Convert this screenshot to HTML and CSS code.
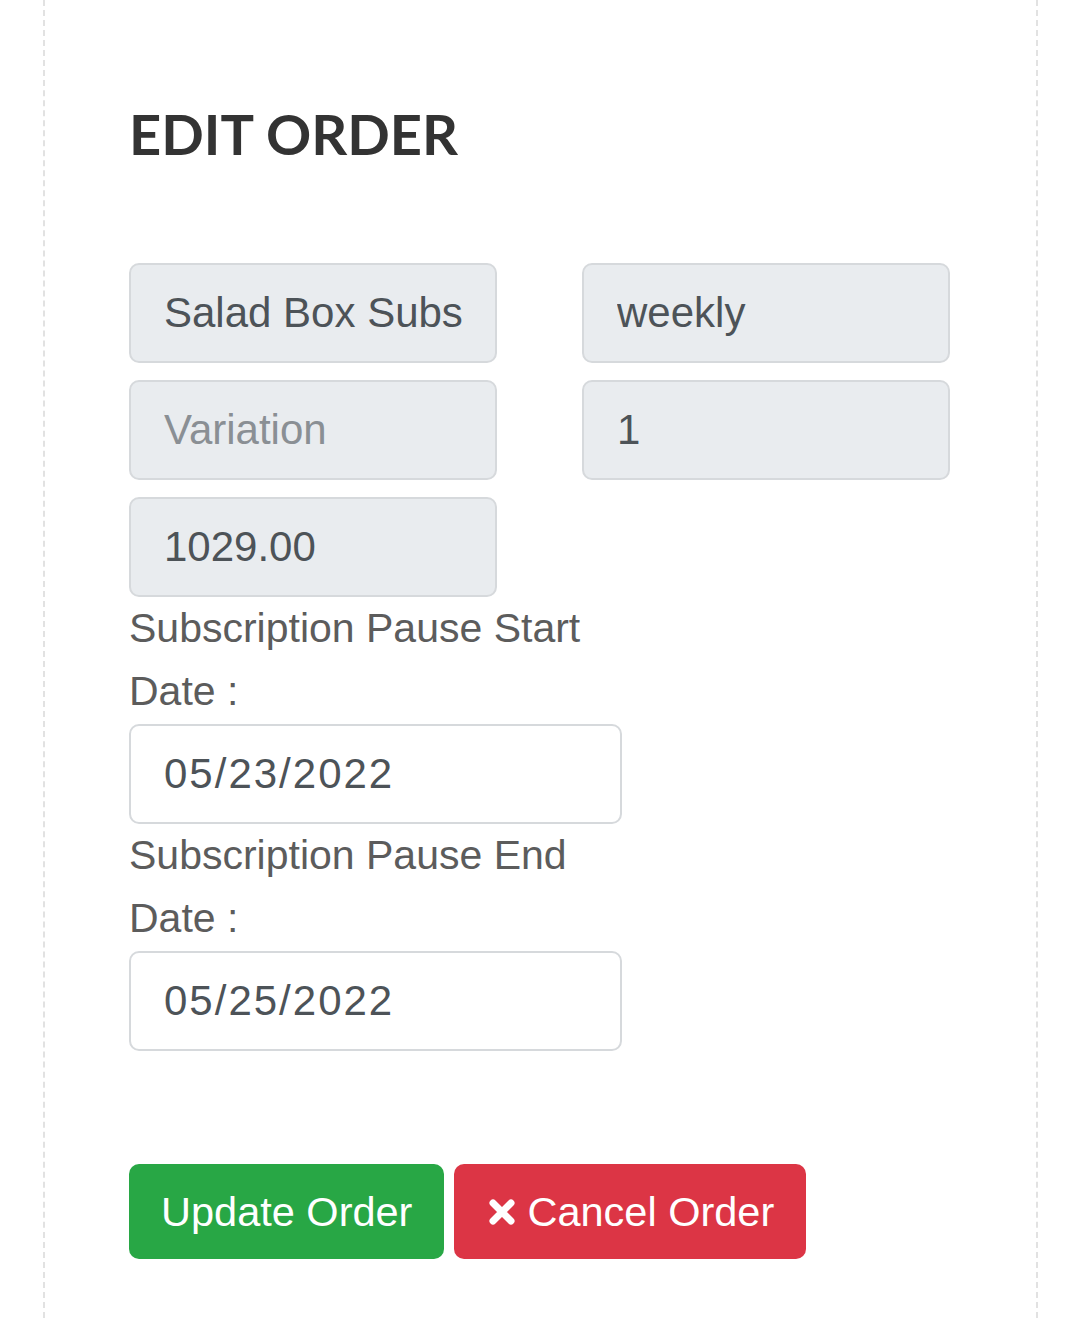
FILE: index.html
```html
<!DOCTYPE html>
<html lang="en">
<head>
<meta charset="utf-8">
<title>Edit Order</title>
<link rel="stylesheet" href="styles.css">
</head>
<body>
<div class="panel">
  <h2 class="title">EDIT ORDER</h2>
  <form class="order-form">
    <div class="grid">
      <input class="field readonly" type="text" value="Salad Box Subscription" readonly>
      <input class="field readonly" type="text" value="weekly" readonly>
      <input class="field readonly" type="text" placeholder="Variation" readonly>
      <input class="field readonly" type="text" value="1" readonly>
      <input class="field readonly" type="text" value="1029.00" readonly>
    </div>
    <div class="dates">
      <label class="label">Subscription Pause Start Date :</label>
      <input class="field date" type="text" value="05/23/2022">
      <label class="label">Subscription Pause End Date :</label>
      <input class="field date" type="text" value="05/25/2022">
    </div>
    <div class="actions">
      <button type="button" class="btn btn-success">Update Order</button>
      <button type="button" class="btn btn-danger"><svg class="x-icon" viewBox="0 0 28 28" width="28" height="28" aria-hidden="true"><path d="M5 5 L23 23 M23 5 L5 23" stroke="#fff" stroke-width="7" stroke-linecap="round"/></svg>Cancel Order</button>
    </div>
  </form>
</div>
</body>
</html>
```

FILE: styles.css
```css
html, body {
  margin: 0;
  padding: 0;
  background: #fff;
}

body {
  font-family: "Liberation Sans", Arial, sans-serif;
}

.panel {
  margin-left: 43px;
  width: 995px;
  box-sizing: border-box;
  min-height: 1318px;
  border-left: 2px dashed #e2e2e2;
  border-right: 2px dashed #e2e2e2;
  padding: 100px 0 0 84px;
}

.title {
  margin: 0;
  font-family: Lato, "Liberation Sans", sans-serif;
  font-weight: 700;
  font-size: 56px;
  line-height: 1.2;
  color: #333;
}

.order-form {
  margin-top: 96px;
}

.grid {
  display: grid;
  grid-template-columns: 368px 368px;
  column-gap: 85px;
  row-gap: 17px;
}

.field {
  display: block;
  box-sizing: border-box;
  height: 100px;
  width: 100%;
  margin: 0;
  padding: 0 32px 0 33px;
  border: 2px solid #d6d9dc;
  border-radius: 10px;
  background: #fff;
  font-family: "Liberation Sans", Arial, sans-serif;
  font-size: 42px;
  color: #4d5358;
  outline: none;
}

.field.readonly {
  background: #e9ecef;
}

.field.date {
  letter-spacing: 2px;
}

.field::placeholder {
  color: #8a8f94;
}

.dates {
  width: 493px;
}

.label {
  display: block;
  font-size: 41px;
  line-height: 63px;
  color: #5c5c5c;
  margin-bottom: 1px;
}

.actions {
  display: flex;
  gap: 10px;
  margin-top: 113px;
}

.btn {
  display: inline-flex;
  align-items: center;
  box-sizing: border-box;
  height: 95px;
  padding: 0 32px 0 32px;
  border: none;
  border-radius: 10px;
  font-family: "Liberation Sans", Arial, sans-serif;
  font-size: 41.5px;
  color: #fff;
}

.btn-success {
  background: #28a745;
}

.btn-danger {
  background: #dc3545;
  padding-left: 34px;
}

.x-icon {
  margin-right: 11px;
}
```
